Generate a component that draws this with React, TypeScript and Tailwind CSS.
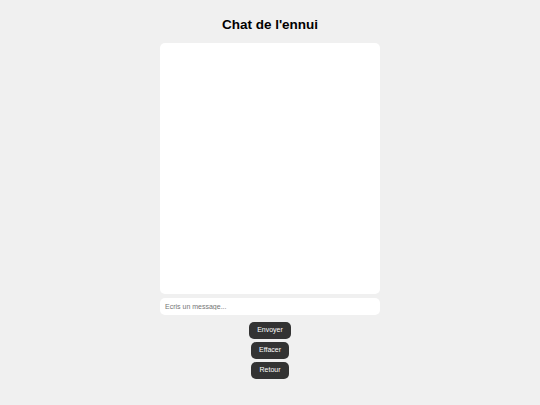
export default function App() {
  return (
    <div className="flex min-h-screen flex-col items-center bg-[#f0f0f0] pt-[15px] font-['Liberation_Sans',Arial,sans-serif]">
      <h1 className="text-[13.5px] font-bold leading-[20px] text-black">Chat de l'ennui</h1>
      <div className="mt-[8px] h-[251px] w-[220px] rounded-[5px] bg-white" />
      <input
        type="text"
        placeholder="Ecris un message..."
        className="mt-[4px] h-[17px] w-[220px] rounded-[5px] bg-white px-[5px] text-[7px] outline-none placeholder:text-[#757575]"
      />
      <div className="mt-[7px] flex flex-col items-center gap-[3px]">
        <button className="h-[17px] rounded-[5px] bg-[#333333] px-[8px] text-[7px] text-white">Envoyer</button>
        <button className="h-[17px] rounded-[5px] bg-[#333333] px-[8px] text-[7px] text-white">Effacer</button>
        <button className="h-[17px] rounded-[5px] bg-[#333333] px-[8px] text-[7px] text-white">Retour</button>
      </div>
    </div>
  );
}
